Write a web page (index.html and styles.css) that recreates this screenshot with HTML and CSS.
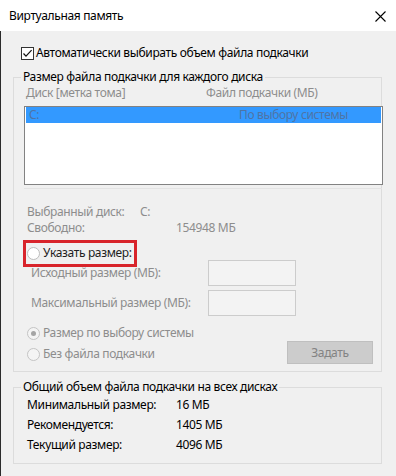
FILE: index.html
```html
<!DOCTYPE html>
<html lang="ru">
<head>
<meta charset="utf-8">
<title>Виртуальная память</title>
<link rel="stylesheet" href="styles.css">
</head>
<body>
<div class="win">
  <div class="titlebar">
    <span class="title">Виртуальная память</span>
    <svg class="close" width="11" height="11" viewBox="0 0 11 11"><path d="M0.5 0.5 L10.5 10.5 M10.5 0.5 L0.5 10.5" stroke="#000" stroke-width="1.1" fill="none"/></svg>
  </div>
  <div class="content">
    <div class="check-row">
      <span class="checkbox"><svg width="11" height="11" viewBox="0 0 11 11"><path d="M1.5 5.5 L4 8.2 L9.6 2.2" stroke="#111" stroke-width="1.2" fill="none"/></svg></span>
      <span>Автоматически выбирать объем файла подкачки</span>
    </div>

    <fieldset class="group g1">
      <legend>Размер файла подкачки для каждого диска</legend>
      <div class="list-head dis"><span class="col1">Диск [метка тома]</span><span>Файл подкачки (МБ)</span></div>
      <div class="listbox">
        <div class="row sel"><span class="c1">C:</span><span class="c2">По выбору системы</span></div>
      </div>
      <div class="sep"></div>
      <div class="info dis">
        <div class="info-row"><span class="lab-disk">Выбранный диск:</span><span>C:</span></div>
        <div class="info-row"><span class="lab-free">Свободно:</span><span>154948 МБ</span></div>
      </div>
      <div class="radio-row custom">
        <span class="radio white"></span><span>Указать размер:</span>
        <span class="mark"></span>
      </div>
      <div class="field-row first dis"><span class="field-label">Исходный размер (МБ):</span><span class="input"></span></div>
      <div class="field-row dis"><span class="field-label">Максимальный размер (МБ):</span><span class="input"></span></div>
      <div class="bottom-row">
        <div class="radios dis">
          <div class="radio-row"><span class="radio checked"></span><span>Размер по выбору системы</span></div>
          <div class="radio-row second"><span class="radio"></span><span>Без файла подкачки</span></div>
        </div>
        <div class="button">Задать</div>
      </div>
    </fieldset>

    <fieldset class="group g2">
      <legend>Общий объем файла подкачки на всех дисках</legend>
      <div class="total-row"><span class="tl">Минимальный размер:</span><span>16 МБ</span></div>
      <div class="total-row"><span class="tl">Рекомендуется:</span><span>1405 МБ</span></div>
      <div class="total-row"><span class="tl">Текущий размер:</span><span>4096 МБ</span></div>
    </fieldset>
  </div>
</div>
</body>
</html>
```

FILE: styles.css
```css
* { box-sizing: border-box; }
html, body {
  margin: 0;
  padding: 0;
}
body {
  width: 396px;
  height: 476px;
  overflow: hidden;
  background: #f0f0f0;
  font-family: "Noto Sans", "Open Sans", sans-serif;
  font-size: 12px;
  line-height: 16px;
  letter-spacing: -0.35px;
  color: #000;
}
.win {
  width: 396px;
  height: 476px;
}
.titlebar {
  height: 31px;
  background: #fff;
  display: flex;
  align-items: center;
  padding: 1px 10px 0 9px;
}
.title { flex: 1; }
.close { display: block; }
.content {
  height: 445px;
  border-left: 1px solid #2b2b2b;
  padding-top: 14px;
}
.check-row {
  display: flex;
  align-items: center;
  height: 16px;
  margin-left: 20px;
  gap: 2px;
}
.checkbox {
  width: 13px;
  height: 13px;
  border: 1px solid #333;
  background: #fff;
  display: flex;
}
.checkbox svg { display: block; }
.dis { color: #8d8d8d; }

.group {
  margin: 8px 14px 0 12px;
  padding: 0;
  border: 1px solid #dcdcdc;
  min-width: 0;
}
.group legend {
  margin-left: 7px;
  padding: 0 2px;
  line-height: 16px;
}
.list-head {
  display: flex;
  height: 21px;
  padding-left: 12px;
}
.list-head .col1 { width: 180px; }
.listbox {
  width: 359px;
  height: 79px;
  margin-left: 10px;
  border: 1px solid #828282;
  background: #fff;
  padding: 0 1px;
}
.row {
  height: 16px;
  display: flex;
}
.row.sel {
  background: #3399ff;
  color: #4f74a6;
}
.row .c1 { width: 213px; padding-left: 3px; }
.sep {
  width: 358px;
  height: 1px;
  margin: 3px 0 0 10px;
  background: #e3e3e3;
}
.info { margin-top: 15px; padding-left: 13px; }
.info-row { display: flex; height: 16px; }
.lab-disk { width: 113px; }
.lab-free { width: 149px; }

.radio-row {
  display: flex;
  align-items: center;
  height: 16px;
  gap: 3px;
  padding-left: 13px;
}
.radio {
  width: 13px;
  height: 13px;
  border-radius: 50%;
  border: 1px solid #c4c4c4;
  background: #f4f4f4;
  display: flex;
  align-items: center;
  justify-content: center;
}
.radio.white { background: #fff; border-color: #bdbdbd; }
.radio.checked::after {
  content: "";
  width: 5px;
  height: 5px;
  border-radius: 50%;
  background: #a5a5a5;
}
.custom {
  position: relative;
  margin-top: 9px;
  color: #1e1e1e;
}
.mark {
  position: absolute;
  left: 9px;
  top: -5px;
  width: 114px;
  height: 27px;
  border: 3px solid #d8242b;
}
.field-row {
  display: flex;
  align-items: center;
  height: 26px;
  padding-left: 17px;
  margin-top: 4px;
}
.field-row.first { margin-top: -1px; }
.field-label { width: 177px; }
.input {
  width: 88px;
  height: 26px;
  border: 1px solid #cccccc;
  background: #f3f3f3;
}
.bottom-row {
  display: flex;
  align-items: flex-end;
  justify-content: space-between;
  margin-top: 9px;
  padding-bottom: 7px;
}
.radios { padding-bottom: 2px; }
.radio-row.second { margin-top: 5px; }
.button {
  width: 86px;
  height: 23px;
  margin-right: 8px;
  background: #cccccc;
  border: 1px solid #bfbfbf;
  color: #838383;
  display: flex;
  align-items: center;
  justify-content: center;
}
.g2 { margin-top: 7px; padding: 5px 0 8px; }
.g2 legend { margin-bottom: -5px; }
.total-row {
  display: flex;
  height: 20px;
  align-items: center;
  padding-left: 13px;
}
.tl { width: 149px; }
```
